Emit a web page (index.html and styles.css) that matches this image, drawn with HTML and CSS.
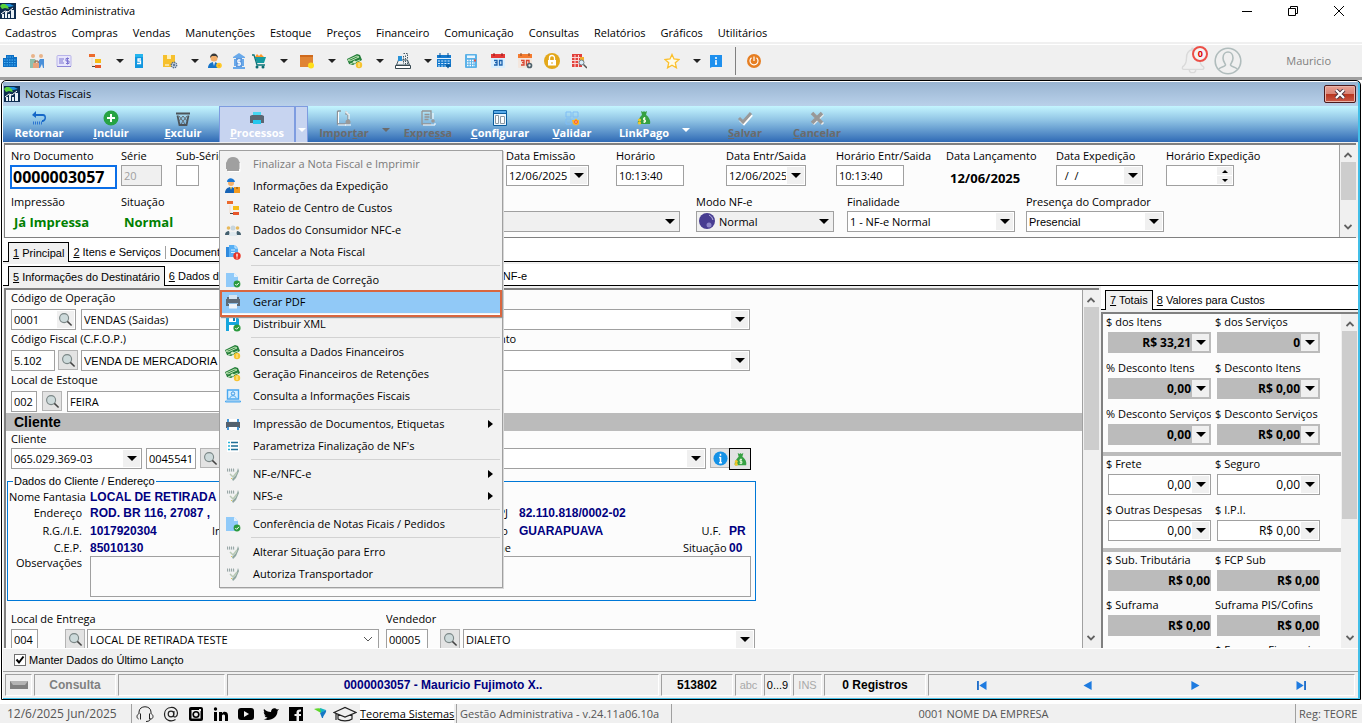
FILE: index.html
```html
<!DOCTYPE html>
<html lang="pt-BR">
<head>
<meta charset="utf-8">
<title>Gestão Administrativa</title>
<link rel="stylesheet" href="styles.css">
</head>
<body>
<svg class="sprite" aria-hidden="true">
  <symbol id="logo" viewBox="0 0 16 16"><rect width="16" height="16" fill="#0d2c4f"/><path d="M0 3 2 1h5l4 2-3 1 1 2-4-1-3 1z" fill="#59d23a"/><path d="M5 1h5l4 2-5 1z" fill="#1c8fe0"/><path d="M2 15v-4h2v4zM5 15V9h2v6zM8 15v-4h2v4zM11 15V7h3v8z" fill="#e8f1f7"/><path d="M1 11l4-3 3 1 5-4" stroke="#fff" fill="none"/></symbol>
  <symbol id="building" viewBox="0 0 16 16"><path d="M4 2h8v2h3v10H1V5h3z" fill="#0c6fc4"/><path d="M5 4h6M2 7h12M2 9.500h12M2 12h12" stroke="#4db2f5" stroke-dasharray="1.500 1"/></symbol>
  <symbol id="people" viewBox="0 0 16 16"><circle cx="4" cy="3" r="2" fill="#e9b48a"/><circle cx="12" cy="3" r="2" fill="#e9b48a"/><path d="M1 6h5l2 3-2 1v5H1z" fill="#8fbfae"/><path d="M15 6h-4L9 9l1 6h1l2-4 1 4h1z" fill="#4a90d9"/><path d="M4 10h6v5H4z" fill="#e8a27c"/><path d="M6 10V8h3v2" fill="none" stroke="#a65f3e"/></symbol>
  <symbol id="card" viewBox="0 0 16 16"><rect x="1" y="2.500" width="14" height="11" rx="1" fill="#e8e6fb" stroke="#b9b4ea"/><path d="M3 6h5M3 8h4M3 10h5M13 5.500h-3V8h3v2.500h-3M11.500 4.500v7" stroke="#7d74d1" fill="none"/><path d="M1 13.500h14" stroke="#8d86d8"/></symbol>
  <symbol id="tree" viewBox="0 0 16 16"><path d="M2 1h6v3H2z" fill="#ec6b2d"/><path d="M8 6h6v4H8z" fill="#f5bd16"/><path d="M8 12h6v3H8z" fill="#e8562a"/><path d="M5 5v8h2" stroke="#f2dcc9" fill="none"/><path d="M5 13.500h3" stroke="#444"/></symbol>
  <symbol id="sdoc" viewBox="0 0 16 16"><path d="M4 1h8v14H4z" fill="#1297e0"/><path d="M4 1h8v3H4z" fill="#24b5ee"/><path d="M10 6H7v2h2.500v2.500H6" stroke="#fff" stroke-width="1.300" fill="none"/></symbol>
  <symbol id="boxgear" viewBox="0 0 16 16"><path d="M1 2h12v12H1z" fill="#f6c02d"/><path d="M5 2h4v4H5z" fill="#fff0b8"/><path d="M3 12h4" stroke="#fff"/><circle cx="12" cy="12" r="2.600" fill="#dfe7ee" stroke="#546e8f" stroke-width="1.600" stroke-dasharray="1.300 .7"/><circle cx="12" cy="12" r="1" fill="#3d5a80"/></symbol>
  <symbol id="usercoin" viewBox="0 0 16 16"><circle cx="7" cy="5" r="3.500" fill="#f2ae6a"/><path d="M3 5c0-6 8-6 8 0L9 3H5z" fill="#3a3a3a"/><path d="M1 15c0-4 3-6 6-6s5 2 6 6z" fill="#1674c9"/><path d="M6 9h2l-1 4z" fill="#fff"/><circle cx="12" cy="12.500" r="2.800" fill="#ffc928"/><circle cx="12" cy="12.500" r="1" fill="#ff9b20"/></symbol>
  <symbol id="bank" viewBox="0 0 16 16"><path d="M8 0l6 4v1H2V4zM2 14h12v2H2zM3 6h2v7H3zM11 6h2v7h-2z" fill="#69a9ea"/><path d="M5 5h6v9H5z" fill="#5c97dd"/><path d="M9.500 7H6.800v2.500h2.500V12H6.500M8 6v7" stroke="#fff" fill="none"/></symbol>
  <symbol id="cart" viewBox="0 0 16 16"><path d="M4 4l2-3 2 2 2-2 3 3z" fill="#ff9628"/><path d="M4 4h11l-2 6H6z" fill="#169ba0"/><path d="M1 2h2l3 10h8" stroke="#0b7579" stroke-width="1.300" fill="none"/><circle cx="6" cy="14" r="1.500" fill="#0c6b70"/><circle cx="12" cy="14" r="1.500" fill="#0c6b70"/></symbol>
  <symbol id="boxsun" viewBox="0 0 16 16"><path d="M1 2h13v12H1z" fill="#e08434"/><path d="M1 2h13v2H1z" fill="#cf6a1d"/><circle cx="12" cy="12.500" r="3" fill="#ffdf1a"/></symbol>
  <symbol id="money" viewBox="0 0 16 16"><path d="M0 6l10-5 3 1 2 5-9 5-4-1z" fill="#267f3b"/><path d="M1 7l9-4 2 1-9 4zM3 11l10-4" stroke="#bfe6b5" fill="none"/><circle cx="7.500" cy="9" r="1.500" fill="#d9f0ce"/><circle cx="12" cy="12" r="3.200" fill="#f7c431"/><path d="M12 10v4" stroke="#fff1a8"/></symbol>
  <symbol id="register" viewBox="0 0 16 16"><path d="M3.500 7h9l2 5h-13z" fill="#eef1f3" stroke="#455a64"/><path d="M.500 12.500h15v3H.500z" fill="#fff" stroke="#37474f"/><path d="M3 3h4v5H3z" fill="#2892d7"/><path d="M8.500 .500h4V6M8.500 3v8M10.500 2.500v9M12.500 7v4" stroke="#455a64" fill="none" stroke-dasharray="1.500 1"/></symbol>
  <symbol id="calendar" viewBox="0 0 16 16"><path d="M1 2h14v12H1z" fill="#1479cd"/><path d="M1 5.500h14" stroke="#dff1ff"/><path d="M2 8h12M2 10.500h12M2 13h8" stroke="#d5edff" stroke-dasharray="2 1.200"/><path d="M4 0v4M12 0v4" stroke="#075398"/><path d="M9 11.500h6l-3 4z" fill="#0b5c9f"/></symbol>
  <symbol id="calc" viewBox="0 0 16 16"><rect x="2" y="1" width="12" height="14" rx="1" fill="#5cb2e8"/><path d="M4 2.500h8v2.500H4z" fill="#eaf6ff"/><path d="M4 7.500h8M4 10h8M4 12.500h8" stroke="#fff" stroke-width="1.600" stroke-dasharray="1.500 1"/><path d="M11 6.500h2v2h-2z" fill="#e74c3c"/></symbol>
  <symbol id="cal30" viewBox="0 0 16 16"><rect x="1" y="1" width="14" height="14" rx="1" fill="#d9efff"/><path d="M1 1h14v4H1z" fill="#e53935"/><path d="M4 0v3M12 0v3" stroke="#8e1c1c"/><path d="M4 7.500h3v4.500H4M5 9.700h2M9.500 7.500H12V12H9.500z" stroke="#1b61ad" stroke-width="1.300" fill="none"/></symbol>
  <symbol id="cal30g" viewBox="0 0 16 16"><rect x="1" y="1" width="14" height="14" rx="1" fill="#f3e6dd"/><path d="M1 1h14v4H1z" fill="#f47b30"/><path d="M4 0v3M12 0v3" stroke="#8b4a20"/><path d="M4 7.500h3v4.500H4M5 9.700h2M9.500 7.500H12V12H9.500z" stroke="#d9442f" stroke-width="1.300" fill="none"/><circle cx="12.500" cy="12.500" r="2" fill="#eee" stroke="#4e626c" stroke-width="1.700"/></symbol>
  <symbol id="lock" viewBox="0 0 16 16"><circle cx="8" cy="8" r="8" fill="#e3a81b"/><path d="M4 7h8v5.500H4z" fill="#fff"/><path d="M5.500 7V5a2.500 2.500 0 0 1 5 0v2" stroke="#fff" stroke-width="1.300" fill="none"/><path d="M8 9v2" stroke="#e3a81b"/></symbol>
  <symbol id="searchtable" viewBox="0 0 16 16"><path d="M1 1h10v13H1z" fill="#e2403b"/><path d="M1 4.500h10M1 7.500h10M1 10.500h10M4 2v12M7.500 2v12" stroke="#fbd4d2"/><path d="M9 4h4v5H9z" fill="#f2ae2e"/><circle cx="10.500" cy="9.500" r="2.500" fill="#d9ecf8" stroke="#6d7e88"/><path d="M12.500 11.500L16 15" stroke="#555" stroke-width="1.500"/></symbol>
  <symbol id="star" viewBox="0 0 16 16"><path d="M8 1.500l2 4.500 5 .5-3.700 3.300 1.100 5L8 12.200l-4.400 2.600 1.100-5L1 6.500 6 6z" fill="#fffbe8" stroke="#fbc02d" stroke-width="1.300"/></symbol>
  <symbol id="msg" viewBox="0 0 16 16"><path d="M2 2h12v12H4l-2 1z" fill="#1e90ee"/><path d="M8 4v2M8 7v4M7 11h2" stroke="#fff" stroke-width="1.500"/></symbol>
  <symbol id="power" viewBox="0 0 16 16"><circle cx="8" cy="8" r="7" fill="#e67e22"/><path d="M5.500 4.800a4 4 0 1 0 5 0M8 3.500V8" stroke="#fff" stroke-width="1.200" fill="none"/></symbol>
  <symbol id="tri" viewBox="0 0 8 4"><path d="M0 0h8L4 4z" fill="currentColor"/></symbol>
  <symbol id="triright" viewBox="0 0 5 8"><path d="M0 0l5 4-5 4z" fill="currentColor"/></symbol>
  <symbol id="chev-up" viewBox="0 0 8 6"><path d="M.500 5L4 1.500 7.500 5" fill="none" stroke="#606060" stroke-width="1.800"/></symbol>
  <symbol id="chev-dn" viewBox="0 0 8 6"><path d="M.500 1L4 4.500 7.500 1" fill="none" stroke="#606060" stroke-width="1.800"/></symbol>
  <symbol id="bell" viewBox="0 0 26 30"><path d="M12 3c-5 1-6 5-6 9s-1 7-4 9c-1 2 0 3 1 3h20c2 0 2-2 1-3-3-2-4-5-4-9s-2-8-8-9zM9 24a3.500 3.500 0 0 0 7 0" fill="none" stroke="#dadada" stroke-width="1.500"/><circle cx="12.500" cy="2" r="1.500" fill="#dadada"/></symbol>
  <symbol id="avatar" viewBox="0 0 28 28"><circle cx="14" cy="14" r="12.800" fill="none" stroke="#b0bcbc" stroke-width="1.600"/><path d="M5 22c1-2 6-2 6.500-4 .3-1-2.500-3-2.500-7 0-8 10-8 10 0 0 4-2.800 6-2.500 7 .5 2 5.500 2 6.500 4" fill="none" stroke="#b0bcbc" stroke-width="1.600"/></symbol>
  <symbol id="undo" viewBox="0 0 16 16"><path d="M5 1L1 5l4 3V6h7c2 0 2 3 0 4h-1v2h1c4-1 4-8 0-8H5z" fill="#1668c8"/><path d="M2 13h9" stroke="#2c74d1" stroke-width="3" stroke-dasharray="1 1"/></symbol>
  <symbol id="plus" viewBox="0 0 16 16"><circle cx="8" cy="8" r="7.500" fill="#27a343"/><path d="M8 4v8M4 8h8" stroke="#fff" stroke-width="2"/></symbol>
  <symbol id="trash" viewBox="0 0 16 16"><path d="M1 3.500h14M2.500 5.500l2 9.500h7l2-9.500" stroke="#4d545a" stroke-width="1.800" fill="none"/><path d="M4 6l6 8M8 6l4 5M12 6l-6 8M8 6l-4 5" stroke="#626b72"/></symbol>
  <symbol id="printer" viewBox="0 0 16 16"><path d="M4 1h8v5H4z" fill="#d6e6f2"/><path d="M1 5h14v7H1z" fill="#5c6b78"/><path d="M2 5V3h2v2M12 5V3h2v2" fill="#5c6b78"/><path d="M4 10h8v4.500H4z" fill="#eef5fa"/><path d="M3 9.500h10" stroke="#8dbde4"/></symbol>
  <symbol id="printerc" viewBox="0 0 16 16"><path d="M4 2h8v4H4z" fill="#45d6f2"/><path d="M1 6l2-1h10l2 1v7H1z" fill="#5b6672"/><path d="M4 10h8v4H4z" fill="#25c7ee"/></symbol>
  <symbol id="printerb" viewBox="0 0 16 16"><path d="M2 3h2v3H2zM12 3h2v3h-2z" fill="#4a9ada"/><path d="M1 6h14v6H1z" fill="#53616e"/><path d="M4 3h8v2H4zM4 11h8v3H4z" fill="#fff"/><path d="M2 11h2v3H2zM12 11h2v3h-2z" fill="#4a9ada"/></symbol>
  <symbol id="graydoc" viewBox="0 0 16 16"><path d="M1.500 1v13H10M1.500 1H5M10 1v3h2v6" stroke="#8e9296" stroke-width="1.300" fill="none"/><path d="M2.500 2v11M2 15h8M9 2h2v2h2v5" stroke="#fff" fill="none"/><circle cx="12" cy="12" r="2.500" fill="#999"/><path d="M9 15h6" stroke="#fff"/></symbol>
  <symbol id="graylist" viewBox="0 0 16 16"><path d="M2 1v13h9M2 1h9v8M4.500 4.500h5M4.500 7h5M4.500 9.500h4" stroke="#949494" stroke-width="1.300" fill="none"/><path d="M3 15h12v-2M13 3v6" stroke="#fff" fill="none"/><circle cx="13" cy="11" r="1.800" fill="#999"/></symbol>
  <symbol id="config" viewBox="0 0 16 16"><path d="M1.500 .500h13v15h-13z" fill="#eef7ff" stroke="#0a5c9e"/><path d="M2 1h12v2H2z" fill="#58a9e8"/><path d="M1 3.500h14" stroke="#0a5c9e"/><path d="M3.500 5.500h3v8h-3zM8.500 6.500h4v7h-4z" fill="#fff" stroke="#8d99a3"/></symbol>
  <symbol id="validate" viewBox="0 0 16 16"><path d="M2 2h5v5H2zM9 2h5v5H9zM2 9h5v5H2z" fill="none" stroke="#7fbdf5"/><path d="M8 10l2.500 0 1.500-1.500 1.500 1.500H15v4l-3 1.500L9 14z" fill="#ffb41f"/><circle cx="12" cy="12" r="1.800" fill="#f04b32"/><circle cx="12" cy="12" r=".7" fill="#fff"/></symbol>
  <symbol id="bag" viewBox="0 0 16 16"><path d="M5 1l2 1 1-1 1 1 2-1-1 4c3 2 5 6 4 9H2C1 11 4 7 6 5z" fill="#36a142"/><path d="M9.500 8H7.500v2h2v2h-2.500M8.500 7v6" stroke="#e7f9dd" fill="none"/><circle cx="3.500" cy="10" r="1.600" fill="#f2c62b"/><circle cx="3.500" cy="13" r="1.600" fill="#f2c62b"/></symbol>
  <symbol id="check" viewBox="0 0 16 16"><path d="M3 10l4 4 8-9" stroke="#fff" stroke-width="2.500" fill="none"/><path d="M2 8l4 4 8-9" stroke="#999" stroke-width="3" fill="none"/></symbol>
  <symbol id="cross" viewBox="0 0 16 16"><path d="M4 4l10 10M14 4L4 14" stroke="#eee" stroke-width="3"/><path d="M3 3l10 10M13 3L3 13" stroke="#989898" stroke-width="3.500"/></symbol>
  <symbol id="arch" viewBox="0 0 16 16"><path d="M1 13V7c0-1 1-1 1-2 1-3 3-4 6-4s5 1 6 4c0 1 1 1 1 2v6h-1v2H2v-2z" fill="#a0a0a0"/><path d="M3 15.500h12V7" stroke="#fff" fill="none"/></symbol>
  <symbol id="courier" viewBox="0 0 16 16"><circle cx="6" cy="5" r="3" fill="#f5b06a"/><path d="M2 4c0-5 7-5 8 0z" fill="#1976d2"/><path d="M0 15c0-4 3-6 6-6s4 2 5 6z" fill="#1663b5"/><path d="M5 9h2l-1 3z" fill="#ffd54f"/><path d="M9 9h6v6H9z" fill="#f39a1f"/><path d="M12 9v2" stroke="#7d4b0b"/></symbol>
  <symbol id="group" viewBox="0 0 16 16"><circle cx="3.500" cy="6" r="1.800" fill="#e8b95c"/><circle cx="12.500" cy="6" r="1.800" fill="#e8b95c"/><circle cx="8" cy="6" r="2.500" fill="#c6d5de"/><path d="M0 13c0-3 2-4 4-4l1 4zM16 13c0-3-2-4-4-4l-1 4z" fill="#44606f"/><path d="M4 14c0-3 1-4 4-4s4 1 4 4z" fill="#dfe9ee"/></symbol>
  <symbol id="doccancel" viewBox="0 0 16 16"><path d="M1 3h7v10H1z" fill="#2f8ade"/><path d="M4 1h6l3 3v9H4z" fill="#58b0f5"/><path d="M10 1v3h3M6 6h4M6 8.500h4" stroke="#d7eeff" fill="none"/><circle cx="12" cy="12" r="3.700" fill="#ea3324"/><path d="M12 9.700v3M12 13.500v1" stroke="#fff" stroke-width="1.300"/></symbol>
  <symbol id="docok" viewBox="0 0 16 16"><path d="M1 1h8l4 4v10H1z" fill="#90caf9"/><path d="M9 1v4h4z" fill="#e3f2fd"/><circle cx="12" cy="12" r="3.400" fill="#2b9a3e"/><path d="M10.300 12l1.300 1.300 2.400-2.500" stroke="#fff" fill="none"/></symbol>
  <symbol id="saveok" viewBox="0 0 16 16"><path d="M1 1h11l2 2v12H1z" fill="#16a6dd"/><path d="M4 1h7v5H4zM4 9h7v6H4z" fill="#fff"/><path d="M8 2h2v3H8z" fill="#0d7cb3"/><circle cx="12" cy="12" r="3.600" fill="#2b9a3e"/><path d="M10.300 12l1.300 1.300 2.400-2.500" stroke="#fff" fill="none"/></symbol>
  <symbol id="laptop" viewBox="0 0 16 16"><path d="M2.500 2h11v9h-11z" fill="#d7efff" stroke="#4aa8f0" stroke-width="1.400"/><circle cx="8" cy="5.500" r="1.700" fill="none" stroke="#3b97e2"/><path d="M5 10c0-3 6-3 6 0M.500 13h15v1H.500z" stroke="#4aa8f0" fill="none"/></symbol>
  <symbol id="list" viewBox="0 0 16 16"><path d="M2 2h12v12H2z" fill="#fff"/><path d="M3 4.500h2M3 8h2M3 11.500h2" stroke="#27b3d9" stroke-width="1.600"/><path d="M6 4.500h7M6 8h7M6 11.500h7" stroke="#1f6f97" stroke-width="1.600"/></symbol>
  <symbol id="tool" viewBox="0 0 16 16"><path d="M2 3h8v3H2z" fill="#e3e8e8"/><path d="M2.500 2.500v3M4.500 2.500v3M6.500 2.500v3M8.500 2.500v3" stroke="#9aa7a7"/><path d="M13 2l1 3-3 7-3 3-1-2 4-4z" fill="#8fa6a0"/><path d="M5 8l3 3 4-5" stroke="#b8c9b5" stroke-width="1.500" fill="none"/><path d="M6 12l1 1" stroke="#d8c95a"/></symbol>
  <symbol id="lens" viewBox="0 0 16 16"><circle cx="6.500" cy="6.500" r="4.800" fill="#cddadb" stroke="#7b8787" stroke-width="1.200"/><path d="M10 10l4.500 4.500" stroke="#444" stroke-width="1.600"/></symbol>
  <symbol id="info" viewBox="0 0 16 16"><circle cx="8" cy="8" r="7.500" fill="#1491e6"/><path d="M8 3v2M8 6.500V12M6.500 7H8M6.500 12.500h3" stroke="#fff" stroke-width="1.600"/></symbol>
  <symbol id="first" viewBox="0 0 12 10"><path d="M1.500 0v10" stroke="#1668c8" stroke-width="2"/><path d="M11 0v10L3 5z" fill="#1e7be0"/></symbol>
  <symbol id="prev" viewBox="0 0 10 10"><path d="M9 0v10L0 5z" fill="#1e7be0"/></symbol>
  <symbol id="next" viewBox="0 0 10 10"><path d="M1 0v10l9-5z" fill="#1e7be0"/></symbol>
  <symbol id="last" viewBox="0 0 12 10"><path d="M10.500 0v10" stroke="#1668c8" stroke-width="2"/><path d="M1 0v10l8-5z" fill="#1e7be0"/></symbol>
  <symbol id="headset" viewBox="0 0 18 16"><path d="M3 8V6c0-7 12-7 12 0v2M15 12c0 2-2 3.500-5 3.500" fill="none" stroke="#222"/><path d="M4.500 7.500v6M2.500 8c-2 1-2 4 0 5M13.500 7.500v6M15.500 8c2 1 2 4 0 5" fill="none" stroke="#222"/></symbol>
  <symbol id="at" viewBox="0 0 16 16"><circle cx="8" cy="8" r="2.800" fill="none" stroke="#222" stroke-width="1.200"/><path d="M11 5l-.5 5c.5 2 4 1 4-3 0-8-13-7-13 1 0 7 7 8 11 5.500" fill="none" stroke="#222" stroke-width="1.200"/></symbol>
  <symbol id="insta" viewBox="0 0 16 16"><rect x="1" y="1" width="14" height="14" rx="2"/><rect x="3.500" y="4" width="9" height="8.500" fill="#f0f0f0"/><circle cx="8" cy="8.500" r="3.600"/><circle cx="8" cy="8.500" r="2" fill="#f0f0f0"/><path d="M11 3h2v2h-2z" fill="#f0f0f0"/></symbol>
  <symbol id="linkedin" viewBox="0 0 16 16"><circle cx="2.500" cy="3" r="1.700"/><path d="M1 6h3v9H1zM6 6h3v1.500C10 5 15 5 15 9.500V15h-3v-5c0-2-3-2-3 0v5H6z"/></symbol>
  <symbol id="youtube" viewBox="0 0 16 16"><rect x="0" y="2" width="16" height="12" rx="3"/><path d="M6 5v6l5-3z" fill="#f0f0f0"/></symbol>
  <symbol id="twitter" viewBox="0 0 16 16"><path d="M1 3c2 2 4 3 7 3 0-4 4-5 6-2.500L16 3l-1.500 2c0 7-8 11-14 8 2 0 3-.5 4-1.500-2 0-2.500-1-3-2H3C1 8.500.800 7 .800 6L2 6.500C.500 5.500.500 4 1 3z"/></symbol>
  <symbol id="facebook" viewBox="0 0 16 16"><path d="M1 1h14v14h-4v-5h2V8h-2V6.500c0-1 1-1 2-1v-2c-3-.3-4.500.5-4.500 3V8h-2v2h2v5H1z"/></symbol>
  <symbol id="arrowmark" viewBox="0 0 16 16"><path d="M1 3c3-1 6-1 8 0l-1 4z" fill="#5fd62b"/><path d="M7 2l6 2-5 3z" fill="#12b5c4"/><path d="M7 7l6-3c1 3-3 5-3 8H9z" fill="#1577c4"/></symbol>
  <symbol id="cap" viewBox="0 0 24 16"><path d="M1 6.500l11-5 11 5-11 4.500zM5 8.500V13c3 2.500 11 2.500 14 0V8.500M3 7.500V14" fill="none" stroke="#222" stroke-width="1.200"/></symbol>
</svg>

<header class="titlebar">
  <svg class="i16"><use href="#logo"/></svg>
  <h1>Gestão Administrativa</h1>
  <div class="winbtns">
    <button aria-label="Minimizar"><svg viewBox="0 0 10 10"><path d="M0 5.500h10" stroke="#000"/></svg></button>
    <button aria-label="Restaurar"><svg viewBox="0 0 10 10"><path d="M.500 2.500h7v7h-7zM2.500 2.500v-2h7v7h-2" fill="none" stroke="#000"/></svg></button>
    <button aria-label="Fechar"><svg viewBox="0 0 10 10"><path d="M0 0l10 10M10 0L0 10" stroke="#000"/></svg></button>
  </div>
</header>
<nav class="menubar">
  <button>Cadastros</button><button>Compras</button><button>Vendas</button><button>Manutenções</button><button>Estoque</button><button>Preços</button><button>Financeiro</button><button>Comunicação</button><button>Consultas</button><button>Relatórios</button><button>Gráficos</button><button>Utilitários</button>
</nav>
<div class="toolbar">
  <div class="tools">
    <button aria-label="Empresa"><svg><use href="#building"/></svg></button>
    <button aria-label="Parceiros"><svg><use href="#people"/></svg></button>
    <button class="wide" aria-label="Títulos"><svg><use href="#card"/></svg></button>
    <button class="split close" aria-label="Centro de custos"><svg><use href="#tree"/></svg><svg class="dd"><use href="#tri"/></svg></button>
    <button class="wide" aria-label="Serviços"><svg><use href="#sdoc"/></svg></button>
    <button class="split near" aria-label="Produtos"><svg><use href="#boxgear"/></svg><svg class="dd"><use href="#tri"/></svg></button>
    <button class="near" aria-label="Cliente"><svg><use href="#usercoin"/></svg></button>
    <button class="tight" aria-label="Banco"><svg><use href="#bank"/></svg></button>
    <button class="split" aria-label="Compras"><svg><use href="#cart"/></svg><svg class="dd"><use href="#tri"/></svg></button>
    <button class="split" aria-label="Estoque"><svg><use href="#boxsun"/></svg><svg class="dd"><use href="#tri"/></svg></button>
    <button class="split" aria-label="Financeiro"><svg><use href="#money"/></svg><svg class="dd"><use href="#tri"/></svg></button>
    <button class="split tight" aria-label="Caixa"><svg><use href="#register"/></svg><svg class="dd"><use href="#tri"/></svg></button>
    <button aria-label="Agenda"><svg><use href="#calendar"/></svg></button>
    <button aria-label="Calculadora"><svg><use href="#calc"/></svg></button>
    <button aria-label="Calendário"><svg><use href="#cal30"/></svg></button>
    <button aria-label="Configurar calendário"><svg><use href="#cal30g"/></svg></button>
    <button aria-label="Bloquear"><svg><use href="#lock"/></svg></button>
    <button class="group-end" aria-label="Pesquisar"><svg><use href="#searchtable"/></svg></button>
    <button class="split close" aria-label="Favoritos"><svg><use href="#star"/></svg><svg class="dd"><use href="#tri"/></svg></button>
    <button aria-label="Informação"><svg><use href="#msg"/></svg></button>
    <span class="vsep"></span>
    <button aria-label="Sair"><svg><use href="#power"/></svg></button>
  </div>
  <div class="user">
    <button class="bell" aria-label="Notificações"><svg><use href="#bell"/></svg><span class="badge">0</span></button>
    <svg class="avatar"><use href="#avatar"/></svg>
    <span class="uname">Mauricio</span>
  </div>
</div>

<main class="window">
  <div class="wtitle"><svg class="i16"><use href="#logo"/></svg><h2>Notas Fiscais</h2>
    <button class="wclose" aria-label="Fechar janela"><svg viewBox="0 0 12 10"><path d="M2 1l8 8M10 1L2 9" stroke="#4c3540" stroke-width="4"/><path d="M2 1l8 8M10 1L2 9" stroke="#fff" stroke-width="2.200"/></svg></button></div>

  <div class="actions">
    <button><svg><use href="#undo"/></svg><span>Retornar</span></button>
    <button><svg><use href="#plus"/></svg><span><u>I</u>ncluir</span></button>
    <button><svg><use href="#trash"/></svg><span><u>E</u>xcluir</span></button>
    <div class="procwrap">
      <button class="on"><svg><use href="#printerc"/></svg><span><u>P</u>rocessos</span></button><button class="arrow on" aria-label="Abrir processos"><svg class="dd"><use href="#tri"/></svg></button>
      <div class="menu" role="menu">
        <button disabled><svg><use href="#arch"/></svg>Finalizar a Nota Fiscal e Imprimir</button>
        <button><svg><use href="#courier"/></svg>Informações da Expedição</button>
        <button><svg><use href="#tree"/></svg>Rateio de Centro de Custos</button>
        <button><svg><use href="#group"/></svg>Dados do Consumidor NFC-e</button>
        <button><svg><use href="#doccancel"/></svg>Cancelar a Nota Fiscal</button>
        <hr>
        <button><svg><use href="#docok"/></svg>Emitir Carta de Correção</button>
        <button class="hot"><svg><use href="#printer"/></svg>Gerar PDF</button>
        <button><svg><use href="#saveok"/></svg>Distribuir XML</button>
        <hr>
        <button><svg><use href="#money"/></svg>Consulta a Dados Financeiros</button>
        <button><svg><use href="#money"/></svg>Geração Financeiros de Retenções</button>
        <button><svg><use href="#laptop"/></svg>Consulta a Informações Fiscais</button>
        <hr>
        <button><svg><use href="#printerb"/></svg>Impressão de Documentos, Etiquetas<svg class="sub"><use href="#triright"/></svg></button>
        <button><svg><use href="#list"/></svg>Parametriza Finalização de NF's</button>
        <hr>
        <button><svg><use href="#tool"/></svg>NF-e/NFC-e<svg class="sub"><use href="#triright"/></svg></button>
        <button><svg><use href="#tool"/></svg>NFS-e<svg class="sub"><use href="#triright"/></svg></button>
        <hr>
        <button><svg><use href="#docok"/></svg>Conferência de Notas Ficais / Pedidos</button>
        <hr>
        <button><svg><use href="#tool"/></svg>Alterar Situação para Erro</button>
        <button><svg><use href="#tool"/></svg>Autoriza Transportador</button>
      </div>
    </div>
    <button disabled><svg><use href="#graydoc"/></svg><span>Impor<u>t</u>ar</span></button><button class="arrow" disabled aria-label="Mais importar"><svg class="dd"><use href="#tri"/></svg></button>
    <button disabled><svg><use href="#graylist"/></svg><span>Expre<u>s</u>sa</span></button>
    <button><svg><use href="#config"/></svg><span><u>C</u>onfigurar</span></button>
    <button><svg><use href="#validate"/></svg><span><u>V</u>alidar</span></button>
    <button><svg><use href="#bag"/></svg><span>LinkPago</span></button><button class="arrow after" aria-label="Mais LinkPago"><svg class="dd"><use href="#tri"/></svg></button>
    <button disabled><svg><use href="#check"/></svg><span><u>S</u>alvar</span></button>
    <button disabled><svg><use href="#cross"/></svg><span><u>C</u>ancelar</span></button>
  </div>

  <section class="head">
    <div class="headbody">
      <div class="hrow one">
        <div class="field"><label for="nro">Nro Documento</label><input id="nro" class="nro" value="0000003057"></div>
        <div class="field"><label for="serie">Série</label><input id="serie" class="w41" value="20" disabled></div>
        <div class="field"><label for="sub">Sub-Série</label><input id="sub" class="w23"></div>
        <div class="field"><label for="dem">Data Emissão</label><div class="combo w84"><input id="dem" value="12/06/2025"><button aria-label="Abrir"></button></div></div>
        <div class="field"><label for="hor">Horário</label><input id="hor" class="w68" value="10:13:40"></div>
        <div class="field"><label for="des">Data Entr/Saida</label><div class="combo w80"><input id="des" value="12/06/2025"><button aria-label="Abrir"></button></div></div>
        <div class="field"><label for="hes">Horário Entr/Saida</label><input id="hes" class="w68" value="10:13:40"></div>
        <div class="field"><span class="lab">Data Lançamento</span><output class="launch">12/06/2025</output></div>
        <div class="field"><label for="dex">Data Expedição</label><div class="combo w87"><input id="dex" value="  /  /"><button aria-label="Abrir"></button></div></div>
        <div class="field"><label for="hex">Horário Expedição</label><div class="combo w68"><input id="hex"><span class="spin"><button aria-label="Aumentar"><svg class="up"><use href="#tri"/></svg></button><button aria-label="Diminuir"><svg><use href="#tri"/></svg></button></span></div></div>
      </div>
      <div class="hrow two">
        <div class="field"><span class="lab">Impressão</span><output class="green">Já Impressa</output></div>
        <div class="field"><span class="lab">Situação</span><output class="green">Normal</output></div>
        <div class="field"><select class="gray push w449" aria-label="Modelo"><option></option></select></div>
        <div class="field"><label for="modo">Modo NF-e</label><div class="combo gray w138"><svg class="orb" viewBox="0 0 16 16"><circle cx="8" cy="8" r="8" fill="#473c91"/><circle cx="10" cy="12" r="2.500" fill="#8d86c8"/><path d="M10 2a7 7 0 0 1 4 5" stroke="#b9b4de" fill="none"/></svg><input id="modo" value="Normal"><button aria-label="Abrir"></button></div></div>
        <div class="field"><label for="fin">Finalidade</label><select id="fin" class="w168"><option>1 - NF-e Normal</option></select></div>
        <div class="field"><label for="pres">Presença do Comprador</label><select id="pres" class="w138 arial"><option>Presencial</option></select></div>
      </div>
    </div>
    <div class="vbar"><svg><use href="#chev-up"/></svg><span class="thumb t1"></span><svg><use href="#chev-dn"/></svg></div>
  </section>

  <nav class="tabs"><button class="cur"><u>1</u> Principal</button><button><u>2</u> Itens e Serviços</button><i></i><button>Documentos</button></nav>
  <nav class="tabs second"><button class="cur"><u>5</u> Informações do Destinatário</button><button class="long"><u>6</u> Dados de Entrega</button><button class="flush">NF-e</button></nav>

  <div class="work">
    <section class="left">
      <div class="form">
        <div class="frow">
          <div class="c375"><div class="field f4"><label for="op">Código de Operação</label><div class="line">
            <div class="combo look w65"><input id="op" value="0001"><button class="lens" aria-label="Pesquisar operação"><svg><use href="#lens"/></svg></button></div>
            <input class="ml6 grow" value="VENDAS (Saidas)" aria-label="Operação"></div></div></div>
          <div class="field f4"><select class="w363 push20" aria-label="Tabela"><option></option></select></div>
        </div>
        <div class="frow">
          <div class="c375"><div class="field f4"><label for="cfop">Código Fiscal (C.F.O.P.)</label><div class="line g3">
            <input id="cfop" class="w44 arial" value="5.102"><button class="lens box" aria-label="Pesquisar CFOP"><svg><use href="#lens"/></svg></button>
            <input class="grow arial" value="VENDA DE MERCADORIA" aria-label="Descrição CFOP"></div></div></div>
          <div class="field f4"><label for="cond">Condições de Pagamento</label><select id="cond" class="w363"><option></option></select></div>
        </div>
        <div class="frow">
          <div class="c375"><div class="field f4"><label for="est">Local de Estoque</label><div class="line g6">
            <input id="est" class="w25" value="002"><button class="lens box" aria-label="Pesquisar estoque"><svg><use href="#lens"/></svg></button>
            <input class="grow" value="FEIRA" aria-label="Estoque"></div></div></div>
        </div>
        <h3 class="band">Cliente</h3>
        <div class="frow"><div class="field f1"><label for="cli">Cliente</label><div class="line cli">
          <select id="cli" class="w130"><option>065.029.369-03</option></select><input class="w50" value="0045541" aria-label="Código do cliente"><button class="lens box" aria-label="Pesquisar cliente"><svg><use href="#lens"/></svg></button>
          <select class="w480" aria-label="Nome do cliente"><option></option></select><span class="pair"><button class="lens box" aria-label="Informações"><svg><use href="#info"/></svg></button><button class="lens box dark" aria-label="Financeiro"><svg><use href="#bag"/></svg></button></span></div></div></div>
        <fieldset class="address"><legend>Dados do Cliente / Endereço</legend>
          <div class="agrid">
            <span class="r">Nome Fantasia</span><b class="s2">LOCAL DE RETIRADA</b><span></span><b></b><span></span><b></b>
            <span class="r">Endereço</span><b class="s2">ROD. BR 116, 27087 ,</b><span class="r far-r">CNPJ</span><b class="s3">82.110.818/0002-02</b>
            <span class="r">R.G./I.E.</span><b>1017920304</b><span>Insc.</span><span class="r far-r">Município</span><b>GUARAPUAVA</b><span class="r">U.F.</span><b>PR</b>
            <span class="r">C.E.P.</span><b class="s2">85010130</b><span class="r">Telefone</span><b></b><span class="r">Situação</span><b>00</b>
            <label class="r" for="obs">Observações</label><textarea id="obs"></textarea>
          </div>
        </fieldset>
        <div class="frow last">
          <div class="c375"><div class="field f2"><label for="ent">Local de Entrega</label><div class="line">
            <input id="ent" class="w26" value="004"><button class="lens box far" aria-label="Pesquisar local"><svg><use href="#lens"/></svg></button><select class="flat w292" aria-label="Local"><option>LOCAL DE RETIRADA TESTE</option></select></div></div></div>
          <div class="field f2"><label for="ven">Vendedor</label><div class="line">
            <input id="ven" class="w42" value="00005"><button class="lens box mid" aria-label="Pesquisar vendedor"><svg><use href="#lens"/></svg></button><select class="w292" aria-label="Nome do vendedor"><option>DIALETO</option></select></div></div>
        </div>
      </div>
      <div class="vbar"><svg><use href="#chev-up"/></svg><span class="thumb t2"></span><svg><use href="#chev-dn"/></svg></div>
    </section>
    <aside class="right">
      <nav class="tabs"><button class="cur"><u>7</u> Totais</button><button><u>8</u> Valores para Custos</button></nav>
      <div class="rpanel">
        <div class="totals">
          <div class="tgrid ro">
            <div class="field"><label for="t1">$ dos Itens</label><div class="combo"><input id="t1" value="R$ 33,21"><button aria-label="Abrir"></button></div></div>
            <div class="field"><label for="t2">$ dos Serviços</label><div class="combo"><input id="t2" value="0"><button aria-label="Abrir"></button></div></div>
            <div class="field"><label for="t3">% Desconto Itens</label><div class="combo"><input id="t3" value="0,00"><button aria-label="Abrir"></button></div></div>
            <div class="field"><label for="t4">$ Desconto Itens</label><div class="combo"><input id="t4" value="R$ 0,00"><button aria-label="Abrir"></button></div></div>
            <div class="field"><label for="t5">% Desconto Serviços</label><div class="combo"><input id="t5" value="0,00"><button aria-label="Abrir"></button></div></div>
            <div class="field"><label for="t6">$ Desconto Serviços</label><div class="combo"><input id="t6" value="R$ 0,00"><button aria-label="Abrir"></button></div></div>
          </div>
          <div class="tgrid ruled">
            <div class="field"><label for="t7">$ Frete</label><div class="combo"><input id="t7" value="0,00"><button aria-label="Abrir"></button></div></div>
            <div class="field"><label for="t8">$ Seguro</label><div class="combo"><input id="t8" value="0,00"><button aria-label="Abrir"></button></div></div>
            <div class="field"><label for="t9">$ Outras Despesas</label><div class="combo"><input id="t9" value="0,00"><button aria-label="Abrir"></button></div></div>
            <div class="field"><label for="t10">$ I.P.I.</label><div class="combo"><input id="t10" value="R$ 0,00"><button aria-label="Abrir"></button></div></div>
          </div>
          <div class="tgrid ro ruled taxes">
            <div class="field"><label for="t11">$ Sub. Tributária</label><div class="combo"><input id="t11" value="R$ 0,00"></div></div>
            <div class="field"><label for="t12">$ FCP Sub</label><div class="combo"><input id="t12" value="R$ 0,00"></div></div>
            <div class="field"><label for="t13">$ Suframa</label><div class="combo"><input id="t13" value="R$ 0,00"></div></div>
            <div class="field"><label for="t14">Suframa PIS/Cofins</label><div class="combo"><input id="t14" value="R$ 0,00"></div></div>
            <div class="field"></div>
            <div class="field"><span class="lab">$ Encargo Financeiro</span></div>
          </div>
        </div>
        <div class="vbar"><svg><use href="#chev-up"/></svg><span class="thumb t3"></span><svg><use href="#chev-dn"/></svg></div>
      </div>
    </aside>
  </div>

  <div class="keep"><input type="checkbox" id="keep" checked><label for="keep">Manter Dados do Último Lançto</label></div>
  <div class="wstatus">
    <button class="cell c27" aria-label="Teclado"><svg viewBox="0 0 18 8"><path d="M0 0h18v8H0z" fill="#808080"/><path d="M0 0l3 4h12l3-4" fill="#b4b4b4"/></svg></button>
    <b class="cell c82 dim">Consulta</b><span class="cell c107"></span><b class="cell c432 navy">0000003057 - Mauricio Fujimoto X..</b><b class="cell c72">513802</b>
    <span class="cell c27 off">abc</span><span class="cell c27">0...9</span><span class="cell c28 off">INS</span><b class="cell c101">0 Registros</b>
    <span class="cell nav"><button aria-label="Primeiro"><svg><use href="#first"/></svg></button><button aria-label="Anterior"><svg><use href="#prev"/></svg></button><button aria-label="Próximo"><svg><use href="#next"/></svg></button><button aria-label="Último"><svg><use href="#last"/></svg></button></span>
  </div>
</main>

<footer class="appstatus">
  <span class="date">12/6/2025 Jun/2025</span>
  <span class="social">
    <svg class="hs"><use href="#headset"/></svg><svg><use href="#at"/></svg><svg><use href="#insta"/></svg><svg><use href="#linkedin"/></svg><svg><use href="#youtube"/></svg><svg><use href="#twitter"/></svg><svg><use href="#facebook"/></svg><svg><use href="#arrowmark"/></svg><svg class="capi"><use href="#cap"/></svg>
    <a href="#">Teorema Sistemas</a></span>
  <span class="ver">Gestão Administrativa - v.24.11a06.10a</span>
  <span class="company">0001 NOME DA EMPRESA</span>
  <span class="reg">Reg: TEORE</span>
</footer>
</body>
</html>
```
FILE: styles.css
```css
* { box-sizing: border-box; }
html, body { height: 100%; }
body {
  margin: 0; display: flex; flex-direction: column; overflow: hidden;
  background: #fff; color: #000;
  font: 11px/16px "Open Sans", "Noto Sans", sans-serif;
}
button, input, select, textarea { font: inherit; color: inherit; margin: 0; padding: 0; border: 0; background: none; border-radius: 0; }
button { white-space: nowrap; display: flex; align-items: center; justify-content: center; flex: none; }
svg { display: block; flex: none; }
h1, h2, h3 { margin: 0; font: inherit; }
.sprite { width: 0; height: 0; position: absolute; }
.i16 { width: 16px; height: 16px; }

/* application title, menu and toolbar */
.titlebar { display: flex; align-items: center; gap: 6px; height: 22px; flex: none; }
.winbtns { display: flex; margin-left: auto; }
.winbtns button { width: 46px; height: 20px; }
.winbtns svg { width: 10px; height: 10px; }
.menubar { display: flex; gap: 15px; height: 22px; padding: 1px 5px 0; border-bottom: 2px solid #f0f0f0; flex: none; }
.toolbar { display: flex; align-items: center; height: 36px; border-top: 1px solid #fff; background: #f0f0f0; border-bottom: 3px solid #a0a0a0; flex: none; }
.tools { display: flex; align-items: center; padding-left: 2px; }
.tools button { margin-right: 11px; }
.tools svg { width: 16px; height: 16px; }
.tools .split { gap: 13px; }
.tools .dd { width: 8px; height: 4px; color: #222; }
.tools .wide { margin-right: 15px; }
.tools .near { margin-right: 8px; }
.tools .close { margin-right: 7px; }
.tools .tight { margin-right: 4px; }
.tools .group-end { margin-right: 77px; }
.vsep { width: 1px; height: 28px; background: #808080; margin-right: 10px; }
.user { display: flex; align-items: center; margin-left: auto; gap: 8px; color: #808080; padding-right: 31px; }
.bell { position: relative; }
.bell svg { width: 26px; height: 28px; }
.badge { position: absolute; right: -2px; top: -1px; width: 16px; height: 16px; border: 2px solid #ec4f47; border-radius: 8px; background: #f4f4f4; color: #d00; font-weight: 700; font-size: 9px; line-height: 12px; }
.avatar { width: 28px; height: 28px; }
.uname { margin-left: 36px; }

/* inner window */
.window { flex: 1; min-height: 0; display: flex; flex-direction: column; background: #f0f0f0; border: 1px solid #000; border-radius: 5px 5px 0 0; margin: 0 1px; box-shadow: inset 1px 1px #fff, inset -2px -1px #43bfe8; padding: 1px 2px 2px 1px; }
.wtitle { display: flex; align-items: center; gap: 5px; height: 24px; padding: 0 2px 0 1px; background: linear-gradient(#99b4d1, #b9d1ea); flex: none; }
.wclose { margin-left: auto; width: 32px; height: 18px; border: 1px solid #4b1a1c; border-radius: 2px; background: linear-gradient(#e8a193, #d98577 48%, #b8341d 50%, #cb5a48); box-shadow: inset 0 0 0 1px #eab5aa; }
.wclose svg { width: 12px; height: 10px; }
.actions { display: flex; height: 36px; background: linear-gradient(#c4f5ff, #8fc3e4 40%, #2f6ab5); color: #fff; font-weight: 700; flex: none; }
.actions > button, .procwrap > button { width: 72px; flex-direction: column; justify-content: flex-start; padding-top: 4px; }
.actions svg { width: 16px; height: 16px; }
.actions > button span, .procwrap > button span { line-height: 14px; }
.actions > button.arrow, .procwrap > button.arrow { width: 12px; padding-top: 22px; }
.actions svg.dd { width: 8px; height: 4px; }
.actions button.after { margin-right: 17px; }
.actions > button:disabled { color: #6b6b6b; }
.procwrap { display: flex; position: relative; }
.procwrap > button.on { width: 76px; background: #c7d4f0; border: solid #7e9ce0; border-width: 1px 1px 0 1px; padding-top: 3px; }
.procwrap > button.arrow.on { width: 13px; padding-top: 21px; }

/* dropdown */
.menu { position: absolute; left: 0; top: 44px; width: 284px; padding: 2px; background: #f2f2f2; border: 1px solid #a0a0a0; color: #000; font-weight: 400; z-index: 5; box-shadow: 1px 1px #d8d8d8; }
.menu button { width: 100%; height: 22px; justify-content: flex-start; gap: 12px; padding: 0 7px 0 3px; }
.menu button:disabled { color: #7a7a7a; }
.menu svg.sub { width: 5px; height: 8px; margin-left: auto; }
.menu hr { border: 0; height: 1px; margin: 2px 0 3px 29px; background: #d2d2d2; }
.menu .hot { position: relative; background: #91c9f7; }
.menu .hot::after { content: ""; position: absolute; inset: -1px -2px -4px; border: 2px solid #d9663f; box-shadow: inset 0 -1px #fff, 1px 1px 1px #999; }

/* fields */
.field { display: flex; flex-direction: column; gap: 2px; min-width: 0; }
.field > label, .lab { height: 16px; white-space: nowrap; overflow: hidden; }
.field input, .field select { height: 21px; }
.field input, select, .combo, textarea { border: 1px solid #a0a0a0; background: #fff; }
.field input { padding: 0 2px; min-width: 0; }
select { appearance: none; padding: 0 20px 0 2px; background: #fff url("data:image/svg+xml,%3Csvg xmlns='http://www.w3.org/2000/svg' width='17' height='17'%3E%3Cpath d='M0 0h17v17H0z' fill='%23f0f0f0'/%3E%3Cpath d='M4 6h10L9 11z'/%3E%3C/svg%3E") no-repeat right 1px center; }
select.flat { background-image: url("data:image/svg+xml,%3Csvg xmlns='http://www.w3.org/2000/svg' width='17' height='17'%3E%3Cpath d='M4 6l4 4 4-4' fill='none' stroke='%23555'/%3E%3C/svg%3E"); }
.combo { display: flex; height: 21px; }
.field .combo input { border: 0; background: none; flex: 1; width: 0; height: 19px; padding-right: 0; }
.combo > button { width: 17px; background: #f0f0f0; margin: 1px; }
.combo > button:empty::after { content: ""; border: 5px solid transparent; border-top-color: #000; border-bottom: 0; }
select.gray, .gray { background-color: #f0f0f0; }
input:disabled { background: #f0f0f0; color: #a0a0a0; }
.arial, .tabs, .keep, .wstatus, .address b, .band, legend { font-family: "Liberation Sans", Arial, sans-serif; }
.w23 { width: 23px; } .w25 { width: 26px; } .w26 { width: 27px; } .w41 { width: 41px; } .w42 { width: 42px; } .w44 { width: 44px; } .w50 { width: 50px; }
.w65 { width: 65px; } .w68 { width: 68px; } .w80 { width: 80px; } .w84 { width: 83px; } .w87 { width: 87px; } .w130 { width: 131px; } .w138 { width: 138px; }
.w168 { width: 168px; } .w292 { width: 292px; } .w363 { width: 364px; } .w449 { width: 449px; } .w480 { width: 480px; }

/* header panel */
.head { display: flex; margin: 1px 2px 0 1px; border: 2px solid #808080; border-width: 2px 0 1px 1px; background: #fcfcfc; flex: none; }
.headbody { flex: 1; padding: 3px 0 3px 6px; overflow: hidden; }
.headbody .field { gap: 1px; }
.hrow { display: grid; height: 46px; }
.hrow.one { grid-template-columns: 110px 55px 330px repeat(7, 110px); }
.hrow.two { grid-template-columns: 110px 110px 465px 151px 179px 1fr; height: 40px; }
.headbody .nro { width: 107px; height: 24px; padding: 0 1px; margin-left: -1px; border: 2px solid #0b6fe8; font-size: 16px; font-weight: 700; }
.launch { font-size: 13px; font-weight: 700; padding: 5px 0 0 4px; }
.green { font-size: 13px; font-weight: 700; color: #008000; padding: 3px 0 0 3px; }
.push { margin-top: 17px; }
.orb { width: 16px; height: 16px; margin: 1px 2px; }
.spin { display: flex; flex-direction: column; justify-content: space-between; padding: 1px; }
.spin button { width: 15px; height: 8px; background: #f0f0f0; }
.spin svg { width: 6px; height: 3px; }
.spin .up { transform: rotate(180deg); }
.vbar { width: 17px; background: #f0f0f0; display: flex; flex-direction: column; align-items: center; padding: 7px 0; flex: none; border-left: 1px solid #a0a0a0; }
.vbar svg { width: 8px; height: 6px; }
.thumb { width: 15px; background: #cdcdcd; margin: 4px 0 auto; }
.t1 { height: 38px; } .t2 { height: 143px; } .t3 { height: 188px; }

/* tabs */
.tabs { display: flex; align-items: center; height: 24px; padding: 4px 0 0 5px; background: linear-gradient(#000, #000) bottom / 100% 1px no-repeat #fff; flex: none; }
.tabs button { height: 20px; padding: 0 4px; white-space: pre; }
.tabs .cur { border: 1px solid #000; border-bottom: 0; background: #f0f0f0; }
.tabs i { width: 1px; height: 13px; background: #a0a0a0; }
.tabs .long { width: 338px; justify-content: flex-start; }
.tabs .flush { padding: 0; }
.second { border-top: 2px solid #f0f0f0; height: 24px; padding-top: 2px; }

/* work area */
.work { flex: 1; min-height: 0; display: flex; gap: 2px; padding: 0 1px; }
.left { flex: 1; min-width: 0; display: flex; background: #fcfcfc; border: 2px solid #808080; border-width: 2px 0 0 2px; margin-top: 2px; overflow: hidden; }
.form { flex: 1; min-width: 0; }
.frow { display: flex; padding-left: 5px; height: 41px; flex: none; }
.c375 { width: 375px; flex: none; padding-right: 6px; }
.f4 { gap: 3px; } .f1 { gap: 1px; }
.line { display: flex; }
.g3 { gap: 3px; } .g6 { gap: 5px; } .grow { flex: 1; width: 0; }
.ml6 { margin-left: 5px; }
.push20 { margin-top: 19px; }
.lens svg { width: 15px; height: 15px; }
.lens.box { width: 20px; height: 20px; border: 1px solid #b4b4b4; background: #e3e3e3; }
.lens.dark { border-color: #000; width: 22px; height: 22px; margin-left: -1px; }
.far { margin: 0 2px 0 27px; } .mid { margin: 0 3px 0 12px; }
.pair { display: flex; }
.cli { gap: 4px; }
.cli .w480 { margin-left: 2px; }
.band { height: 18px; background: #bbb; font-size: 14px; font-weight: 700; line-height: 18px; padding-left: 8px; }
.address { margin: 0 0 0 1px; width: 749px; min-width: 0; border: 1px solid #0078d7; padding: 0 4px 3px 1px; height: 128px; }
.frow:has(+ .address) { height: 42px; }
legend { padding: 0 1px; margin-left: 4px; line-height: 16px; font-size: 11px; }
.agrid { display: grid; grid-template-columns: 73px 114px 40px 251px 156px 38px 1fr; grid-template-rows: 15px 18px 18px 15px 42px; column-gap: 8px; align-items: center; white-space: nowrap; }
.agrid b { font-size: 12px; color: #000080; }
.agrid .r { text-align: right; }
.agrid .far-r { padding-right: 3px; }
.s2 { grid-column: span 2; } .s3 { grid-column: span 3; }
.agrid textarea { grid-column: 2 / -1; height: 41px; background: #fcfcfc; resize: none; }
.agrid label { align-self: start; }
.last { margin-top: 10px; }

/* totals */
.right { width: 257px; flex: none; display: flex; flex-direction: column; margin-right: -1px; }
.right .tabs { padding-left: 4px; padding-top: 3px; }
.rpanel { flex: 1; min-height: 0; display: flex; overflow: hidden; margin-top: 2px; background: #fcfcfc; border: solid #808080; border-width: 2px 0 0 2px; }
.totals { flex: 1; }
.tgrid { display: grid; grid-template-columns: 105px 106px; column-gap: 4px; grid-auto-rows: 46px; padding-left: 3px; }
.taxes { grid-auto-rows: 45px; }
.ruled { border-top: 4px solid #bbb; }
.tgrid .combo { width: 103px; margin-left: 2px; }
.tgrid .combo input { text-align: right; font-size: 12px; }
.ro .combo { background: #bbb; border-color: #bbb; }
.ro .combo input { font-weight: 700; }
.right .vbar { border: 0; }

/* bottom bars */
.keep { display: flex; align-items: center; height: 24px; gap: 3px; padding-left: 11px; border-top: 1px solid #fff; border-bottom: 1px solid #a0a0a0; flex: none; }
.keep input { width: 12px; height: 12px; margin: 0; appearance: none; border: 1px solid #707070; background: #fff url("data:image/svg+xml,%3Csvg xmlns='http://www.w3.org/2000/svg' width='10' height='10'%3E%3Cpath d='M1.500 4.500l2.500 3 4.500-6' fill='none' stroke='%23000' stroke-width='2'/%3E%3C/svg%3E") center no-repeat; }
.wstatus { display: flex; gap: 2px; height: 25px; padding: 2px 3px 1px 2px; flex: none; }
.cell { display: flex; align-items: center; justify-content: center; border: 1px solid; border-color: #a0a0a0 #fff #fff #a0a0a0; white-space: nowrap; overflow: hidden; flex: none; }
.wstatus b { font-size: 12px; }
.c27 { width: 27px; } .c28 { width: 29px; } .c72 { width: 72px; } .c82 { width: 82px; } .c101 { width: 102px; } .c107 { width: 107px; } .c432 { width: 432px; }
.cell svg { width: 18px; height: 8px; }
.wstatus .dim { color: #808080; } .navy { color: #000080; } .off { color: #a9a9a9; }
.wstatus .nav { flex: 1; justify-content: space-around; }
.nav svg { width: 12px; height: 9px; }
.appstatus { display: flex; height: 23px; border-top: 4px solid #fff; background: #f0f0f0; color: #555; line-height: 20px; flex: none; white-space: nowrap; overflow: hidden; font-size: 12px; }
.appstatus > span { border-right: 1px solid #a0a0a0; flex: none; }
.appstatus .date { width: 132px; padding-left: 7px; }
.social { display: flex; align-items: center; gap: 9px; width: 325px; padding-left: 4px; font-size: 11px; }
.social svg { width: 16px; height: 16px; }
.social .hs { width: 18px; }
.social .capi { width: 24px; margin-left: -5px; }
.social a { color: #000; background: #fff; margin-left: -6px; }
.appstatus .ver { width: 215px; padding-left: 3px; font-size: 11px; }
.appstatus .company { flex: 1; text-align: center; font-size: 11px; }
.appstatus .reg { width: 66px; padding-left: 3px; border: 0; font-size: 11px; }
```
